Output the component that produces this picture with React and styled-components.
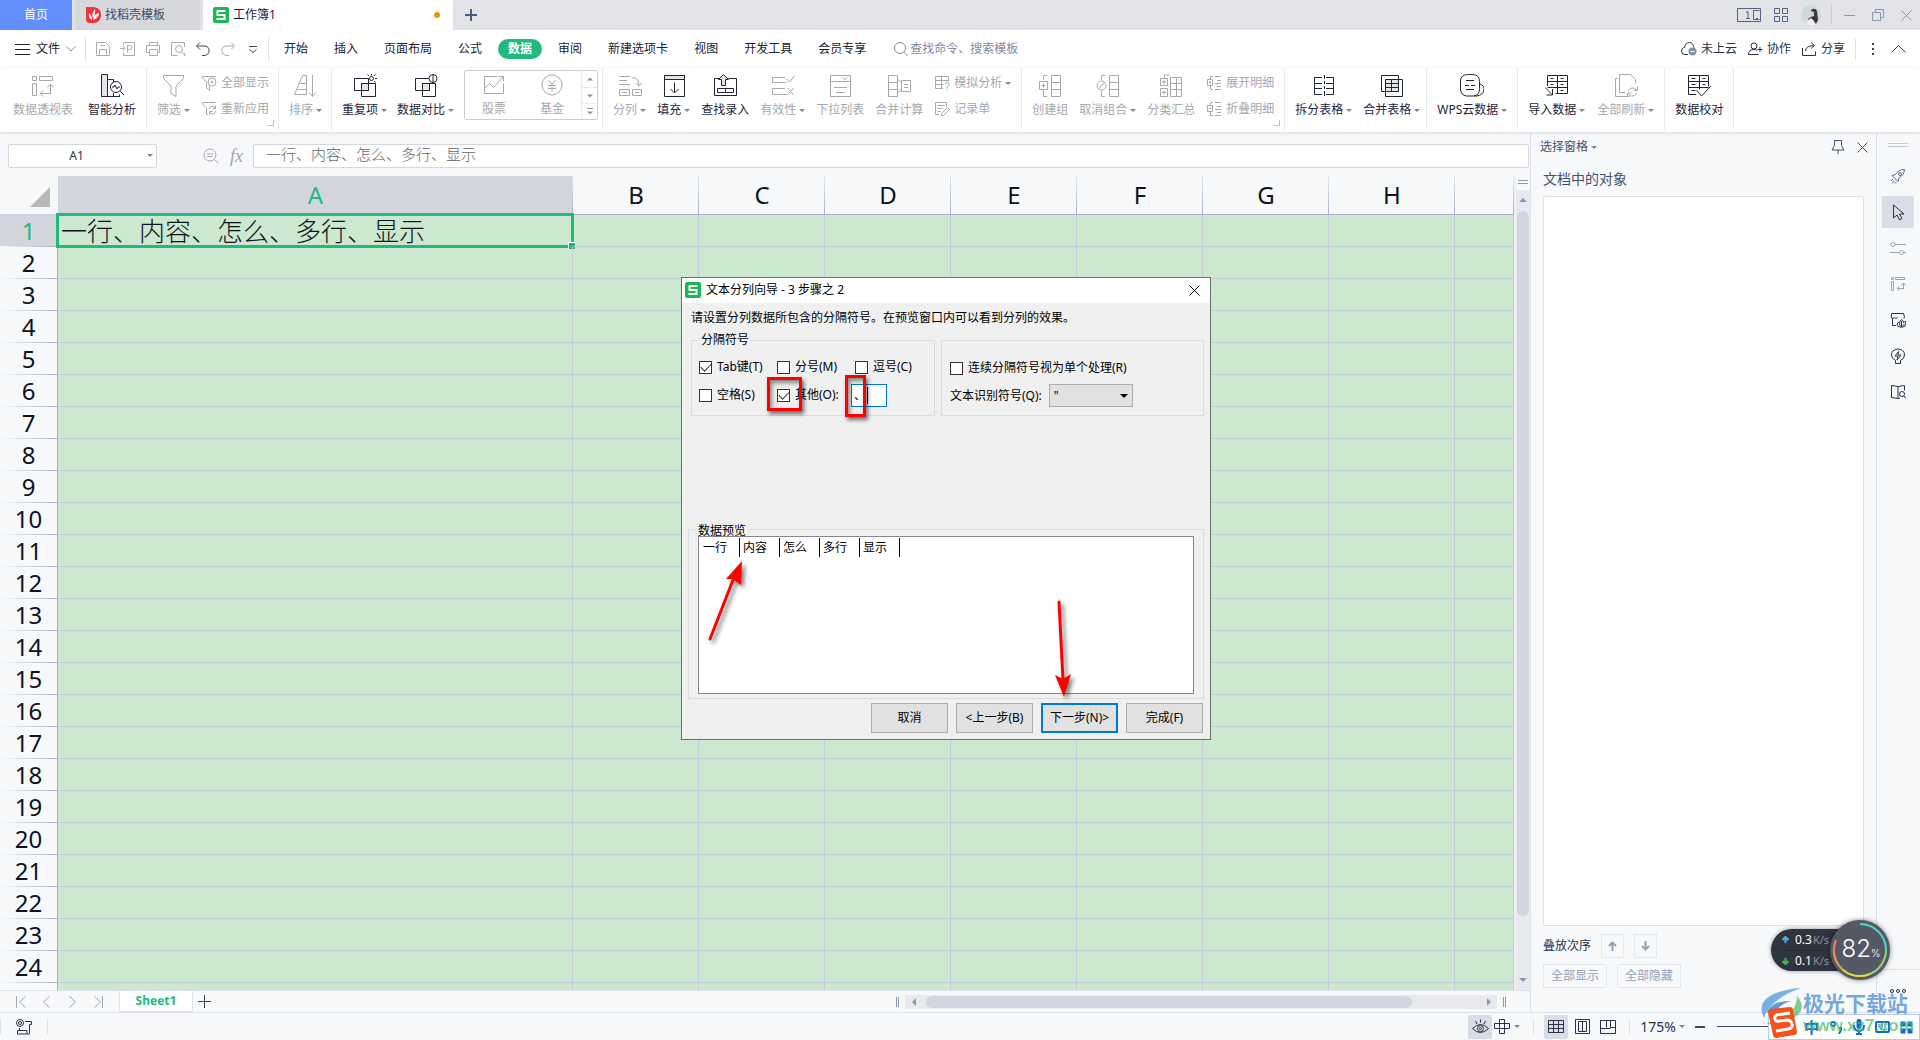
import styled, { createGlobalStyle, css } from 'styled-components';

const GlobalStyle = createGlobalStyle`
  * { box-sizing: border-box; }
  html, body { margin: 0; padding: 0; }
  body {
    font-family: "Noto Sans", "Noto Sans CJK SC", sans-serif;
    font-size: 12px;
    line-height: 16px;
    color: #2b3147;
    background: #f6f8fa;
    overflow: hidden;
  }
  button, input, select {
    font: inherit;
    color: inherit;
    margin: 0;
  }
  button {
    border: 0;
    background: none;
    padding: 0;
    white-space: nowrap;
  }
  a { color: inherit; text-decoration: none; }
  svg { display: block; flex: none; }
`;

/* ---------- icons ---------- */

const Icon = ({ w = 24, h = w, box, children, sw = 1 }) => (
  <svg width={w} height={h} viewBox={box || `0 0 ${w} ${h}`} fill="none" stroke="currentColor" strokeWidth={sw} aria-hidden="true">
    {children}
  </svg>
);

const big = {
  pivot: <path d="M1.5 2.5h4v4h-4zM8.5 2.5h13v4h-13zM1.5 9.5h4v12h-4zM19.5 20.5v-10M16.5 13.5l3-3.5 3 3.5M19.5 19.5h-10M12.5 16.5l-3.5 3 3.5 3" />,
  analyse: <>
    <path d="M1.5.5h6v22h-6z" fill="#e4e6ea" />
    <path d="M7.5 5.5h6v3M7.5 22.5h12M13.5 19v3.5M1.5 22.5h18v-2" />
    <circle cx="16" cy="13" r="5.5" />
    <path d="M12 13h2l1-2 2 4 1-2h2M20 17l4 4" />
  </>,
  filter: <path d="M1.500 1.500h20v3l-7.500 7.500v10.500l-5-3v-7.500l-7.500-7.500z" />,
  sort: <path d="M8.500 1.500l-8 19h12v-19zM5.500 9.500h7M3.500 15.500h9M18.500 1v21M15 18.500l3.500 4 3.500-4" />,
  repeat: <>
    <path d="M8.500 9.500h7v7h-7z" fill="#e4e6ea" />
    <path d="M1.500 4.500h14v12h-14zM8.500 9.500h14v13h-14z" />
    <circle cx="18.500" cy="4.500" r="2" />
    <path d="M18.500 0v1.500M22 4.500h2M21 2l1.500-1.500M16 2l-1.500-1.500M21 7l1.500 1.500" />
  </>,
  compare: <>
    <path d="M8.500 9.500h7v7h-7z" fill="#e4e6ea" />
    <path d="M15 4.500h-13.500v12h14v-7M8.500 9.500h13v13h-13z" />
    <circle cx="19" cy="4.500" r="4" /><path d="M19 0v9" />
  </>,
  stock: <path d="M15 3.500h-12.500v17h19v-10M2.500 15.500l5-5 4 4 10-11M16.500 3.500h5v5" />,
  fund: <><circle cx="12" cy="12" r="10" /><path d="M8.500 7l3.500 4.500 3.500-4.500M12 11.500v7M8 12.500h8M8 15.500h8" /></>,
  split: <path d="M1 2.500h11M1 6.500h8M1 10.500h11M1.500 15.500h10v6h-10zM14.500 15.500h9v6h-9zM4 18.500h5M17 18.500h4M14 3.500q7 0 7 8M18 8.500l3 3.500 3-3.500" />,
  fill: <><path d="M2.500 1.500h20v4h-20z" fill="#e4e6ea" /><path d="M2.500 1.500h20v21h-20zM2.500 5.500h20M12.500 8.500v10M8.500 15l4 4 4-4" /></>,
  lookup: <>
    <path d="M6 4.500h-4.500v17h22v-17h-8M4.500 14.500h16v4h-16zM12.500 14.500v4" />
    <path d="M8.500 11.500v-6h-3l5-5 5 5h-3v6z" fill="#e4e6ea" />
  </>,
  valid: <path d="M14 3.500h-12.500v5h14M14 14.500h-12.500v6h14M15.500 5l3 3 5-6M16.500 14l6 7M22.500 14l-6 7" />,
  dropdown: <path d="M2.500 1.500h20v21h-20zM2.500 7.500h20M14.500 3.500l2.500 2 2.500-2M6 13.500h13M8 18.500h9" />,
  merge: <path d="M1.500 1.500h9v21h-9zM1.500 8.500h9M1.500 15.500h9M10.500 5l4 4M10.500 19l4-4M14.500 6.500h9v11h-9zM17 10.500h4M17 13.500h4" />,
  group: <path d="M9 1.500h-3.500v4M5.500 16v6.500h3.500M1.500 7.500h8v8h-8zM3.500 11.500h4M5.500 9.500v4M13.500 1.500h9v21h-9zM13.500 8.500h9M13.500 15.500h9" />,
  ungroup: <><circle cx="5.500" cy="11.500" r="4.500" /><path d="M2.500 15l6-7M9 1.500h-3.500v4M5.500 17v5.500h3.500M13.500 1.500h9v21h-9zM13.500 8.500h9M13.500 15.500h9" /></>,
  subtotal: <path d="M5.500 4v-3h5M1.500 4.500h7v7h-7zM3 8h4M5 6v4M1.500 14.500h7v8h-7zM3 18.500h4M5 16.500v4M11.500 3.500h11v19h-11zM11.500 9.500h11M11.500 15.500h11M17.500 3.500v19" />,
  splitTable: <path d="M10 3.500h-7.500v17h7.500M2.500 9.500h7.500M2.500 14.500h7.500M14 3.500h7.500v17h-7.500M14 9.500h7.500M14 14.500h7.500M12.500 1v4M12.500 7v3M12.500 12v3M12.500 17v5" />,
  mergeTable: <><path d="M5.500 5.500h13v12h-13z" fill="#e4e6ea" /><path d="M1.500 1.500h17v16h-17zM18.500 5.500h4v17h-17v-5M5.500 5.500h13M5.500 9.500h13M5.500 13.500h13M5.500 5.500v12M11.500 5.500v12" /></>,
  cloudData: <path d="M7.500.500h5q7 0 7 7v7q0 7-6 7.500h-7q-6-1-6-7v-8q0-6 7-6.500zM19.500 10q5 1 4.500 6-1 5-7 6h-3M6 6.500h8M5 11.500h4M11 11.500h4M6 15.500h8" />,
  importData: <path d="M2.500 12v-10.500h20v18h-12M2.500 7.500h20M2.500 13.500h20M12.500 1.500v18M5.500 4.500h3M15.500 4.500h3M15.500 10.500h3M5.500 10.500h3M15.500 16.500h3M0 13.500l7 7M7.500 15v6h-6" />,
  refresh: <path d="M4 4.500h-2.500v18h14M11 18.500h-5.500v-18h11l5 5v4M14 17q2-4 6-3l3 2M23.500 12.500v4h-4M23 19q-2 4-6 3l-3-2M13.500 23v-4h4" />,
  verify: <path d="M9 20.500h-7.500v-19h20v11M1.500 7.500h20M1.500 13.500h20M12.500 1.500v14M4.500 4.500h4M15.500 4.500h3M4.500 10.500h4M15.500 10.500h3M4.500 16.500h4M9.500 16l5 6 9.500-10" />,
};

const small = {
  showAll: <><path d="M5.500 13v-6l-4-4v-1.500h13" /><path d="M5.500 13l3 2v-4" /><circle cx="11" cy="7" r="4" /><circle cx="11" cy="7" r="1" /></>,
  reapply: <><path d="M5.500 13v-6l-4-4v-1.500h13M5.500 13l2 1" /><path d="M8 8q1-3 4-3l2.500 2M14.500 4.500v3h-3M15 10q-1 3-4 3l-2.500-2M8.500 13.500v-3h3" /></>,
  whatIf: <path d="M9 13.500h-7.500v-12h13v5M1.500 5.500h13M1.500 9.500h8M7.500 1.500v12M11 9.500q0-2 2-2t2 2q0 1-2 2.500v1.500M13 14.500v1" />,
  record: <path d="M5 13.500h-3.500v-12h11v4M3.500 4.500h7M3.500 7.500h5M3.500 10.500h3M7.500 12.500l6-6 2 2-6 6h-2z" />,
  expand: <path d="M7 1.500h-2.500v3M4.500 11v3.500h2.500M1.500 4.500h5v6h-5zM3 7.500h2M4 6v3M9 1.500h6M11 5.500h4M9 8.500h6M11 11.500h4M9 14.500h6" />,
  collapse: <path d="M7 1.500h-2.500v3M4.500 11v3.500h2.500M1.500 4.500h5v6h-5zM3 7.500h2M9 1.500h6M11 5.500h4M9 8.500h6M11 11.500h4M9 14.500h6" />,
  save: <path d="M1.500 1.500h9l4 4v9h-13zM4.500 14.500v-6h7v6M5 4.500h5" />,
  exportPdf: <path d="M3.500 4v-2.500h11v13h-11v-3M0 7.500h4.500M2.500 5l2.500 2.500-2.500 2.500M7.500 11.500v-7h2q2.500 0 2.500 2t-2.500 2h-2" />,
  print: <path d="M4.500 4.500v-3h8v3M4.500 11.500h-3v-7h13v7h-2M4.500 8.500h8v6h-8z" />,
  preview: <><path d="M14.500 6v-4.500h-13v13h6M14.500 12v2.500" /><circle cx="9" cy="8" r="3.500" /><path d="M11.500 11l4 4" /></>,
  undo: <path d="M5 1.500l-3.500 3.500 3.500 3.500M2 5h7q5 0 5 4.500t-5 5h-2" />,
  redo: <path d="M11 1.500l3.500 3.500-3.500 3.500M14 5h-7q-5 0-5 4.500t5 5h2" />,
  search: <><circle cx="7" cy="7" r="5.500" /><path d="M11 11l3.500 4" /></>,
};

const side = {
  rocket: <><path d="M14.500 1.500q-6 0-9 5l-3.500 1 6 6 1-3.500q5-3 5.500-8.500z" /><circle cx="10" cy="6" r="1.500" /><path d="M3 11l-2 2M5 12.500l-3 3M6.500 14l-1.500 1.500" /></>,
  pointer: <path d="M3.500 1v13l3.500-3 2.500 5 2.500-1.500-2.500-4.500h4.500z" />,
  sliders: <><circle cx="3" cy="4.500" r="2" /><path d="M5 4.500h11M0 12.500h9" /><circle cx="11.500" cy="12.500" r="2" /><path d="M13.500 12.500h2.500" /></>,
  pivot: <path d="M1.500 1.500h2v2h-2zM5.500 1.500h9v2h-9zM1.500 5.500h2v9h-2zM13.500 13.500v-6M11.500 9.500l2-2.500 2 2.500M13.500 12.500h-6M9.500 10.500l-2.500 2 2.500 2" />,
  gallery: <><path d="M6 13.500h-3.500v-6.500q-2-1-1-5.500h12q1.500 3 .500 5M1.500 5.500q1.500 2 3 0 1.500 2 3 0" /><path d="M8 14.500q-2-2 0-4 1 0 1.500 1 0-3 2-4 2 1 2 3 1-1 2-1 1 3-1 5-3 1.500-6.500 0zM11.500 9v6M9 12l2 2.500M14.500 12l-2.500 2.500" /></>,
  idea: <><path d="M5.500 12.500q-4-2-4-5.500 0-5.500 6.500-6 6.500.500 6.500 6 0 3.500-4 5.500v3h-5z" /><path d="M8.500 3.500l-3.500 4.500h3l-1 4 4-5h-3z" /></>,
  book: <><path d="M8 2.500v12l-6.500-1v-12zM8 2.500l6.500-1v5M8 14.500l2-.500" /><circle cx="12" cy="10" r="2.500" /><path d="M14 12l2 2.500" /></>,
};

const WpsLogo = () => (
  <svg width="16" height="16" viewBox="0 0 16 16" aria-hidden="true">
    <rect width="16" height="16" rx="2" fill="#19b854" />
    <path d="M12.500 4h-8v4h7v4h-8" fill="none" stroke="#fff" strokeWidth="2" />
  </svg>
);

const Caret = styled.i`
  width: 0;
  height: 0;
  margin-left: 3px;
  border: 3px solid transparent;
  border-bottom: 0;
  border-top-color: #7c869c;
  flex: none;
`;

/* ---------- top bars ---------- */

const Shell = styled.div`
  display: flex;
  flex-direction: column;
  height: 100vh;
  position: relative;
`;

const TabBar = styled.header`
  display: flex;
  height: 30px;
  background: #e2e3e7;
`;

const tabColours = {
  home: css`width: 72px; justify-content: center; background: #628ffc; color: #fff; margin-right: 3px;`,
  idle: css`width: 125px; padding-left: 11px; background: #d7d8dc; color: #444b60; margin-right: 3px;`,
  open: css`width: 250px; padding: 0 13px 0 10px; background: #fff; color: #1d2233;`,
};

const FileTab = styled.button`
  display: flex;
  align-items: center;
  gap: 4px;
  ${p => tabColours[p.$kind]}
`;

const Unsaved = styled.span`
  width: 6px;
  height: 6px;
  border-radius: 50%;
  background: #e59a0c;
  margin-left: auto;
`;

const NewTab = styled.button`
  width: 36px;
  display: grid;
  place-items: center;
  color: #4b5a78;
`;

const WindowTools = styled.div`
  display: flex;
  align-items: center;
  gap: 13px;
  margin-left: auto;
  padding-right: 8px;
  color: #53617f;
`;

const WindowButtons = styled.div`
  display: flex;
  align-items: center;
  gap: 17px;
  height: 20px;
  margin-left: -3px;
  padding-left: 12px;
  border-left: 1px solid #c9ccd3;
  color: #8b98b2;
`;

const MenuBar = styled.nav`
  display: flex;
  align-items: center;
  height: 38px;
  background: #fff;
`;

const FileMenu = styled.button`
  display: flex;
  align-items: center;
  gap: 6px;
  height: 24px;
  padding: 0 9px 0 15px;
  border-right: 1px solid #dfe1e6;
  color: #1d2233;
`;

const QuickBar = styled.div`
  display: flex;
  align-items: center;
  gap: 9px;
  height: 24px;
  padding: 0 7px 0 9px;
  margin-right: 5px;
  border-right: 1px solid #dfe1e6;
`;

const IconButton = styled.button`
  color: ${p => (p.$off ? '#a9abb0' : '#3a4259')};
`;

const MenuItem = styled.button`
  height: 20px;
  padding: 0 10px;
  margin-right: 6px;
  border-radius: 10px;
  color: ${p => (p.$on ? '#fff' : '#1d2233')};
  background: ${p => (p.$on ? '#20bb7c' : 'none')};
  font-weight: ${p => (p.$on ? 700 : 400)};
`;

const Search = styled.button`
  display: flex;
  align-items: center;
  gap: 1px;
  margin-left: 11px;
  color: #7f8aa3;
`;

const CloudTools = styled.div`
  display: flex;
  align-items: center;
  gap: 11px;
  margin-left: auto;
  padding-right: 14px;
`;

const CloudButton = styled.button`
  display: flex;
  align-items: center;
  gap: 4px;
`;

const Ribbon = styled.div`
  display: flex;
  height: 64px;
  padding: 0 3px;
  background: #fff;
  box-shadow: 0 1px 3px rgba(60, 70, 90, 0.16);
  position: relative;
  z-index: 1;
`;

const Group = styled.div`
  display: flex;
  gap: ${p => p.$gap || 11}px;
  height: 62px;
  padding: 4px ${p => p.$end || 10}px 0 10px;
  border-right: 1px solid #e9ebee;
  position: relative;
  ${p => p.$launcher && css`
    &::after {
      content: "";
      position: absolute;
      right: 4px;
      bottom: 4px;
      width: 5px;
      height: 5px;
      border: solid #b8c0cc;
      border-width: 0 1px 1px 0;
    }
  `}
`;

const ToolButton = styled.button`
  display: flex;
  flex-direction: column;
  align-items: center;
  gap: 4px;
  height: 46px;
  padding-top: 2px;
  color: ${p => (p.$off ? '#a6a8ad' : '#1f2537')};
`;

const ToolLabel = styled.span`
  display: flex;
  align-items: center;
`;

const Stack = styled.div`
  display: flex;
  flex-direction: column;
  gap: 6px;
  padding-top: 1px;
`;

const RowTool = styled.button`
  display: flex;
  align-items: center;
  height: 20px;
  color: #a6a8ad;
  svg { margin-right: 4px; }
`;

const Gallery = styled.div`
  display: grid;
  grid-template-columns: 58px 58px 16px;
  height: 50px;
  margin-top: -2px;
  border: 1px solid #cccdd0;
  border-radius: 2px;
`;

const GalleryScroll = styled.div`
  display: grid;
  grid-template-rows: repeat(3, 1fr);
  border-left: 1px solid #ececef;
  button {
    display: grid;
    place-items: center;
    color: #8792a8;
  }
  button + button { border-top: 1px solid #ececef; }
`;

const Tool = ({ icon, label, caret, on }) => (
  <ToolButton $off={!on}>
    <Icon>{big[icon]}</Icon>
    <ToolLabel>{label}{caret && <Caret />}</ToolLabel>
  </ToolButton>
);

const SmallTool = ({ icon, label, caret }) => (
  <RowTool><Icon w={16}>{small[icon]}</Icon>{label}{caret && <Caret />}</RowTool>
);

/* ---------- sheet ---------- */

const Main = styled.main`
  display: flex;
  flex: 1;
  min-height: 0;
`;

const Work = styled.section`
  display: flex;
  flex-direction: column;
  flex: 1;
  min-width: 0;
`;

const FormulaRow = styled.div`
  display: flex;
  align-items: center;
  height: 44px;
  padding: 3px 1px 0 8px;
`;

const NameBox = styled.div`
  display: flex;
  align-items: center;
  width: 149px;
  height: 24px;
  padding-right: 3px;
  margin-right: 46px;
  background: #fff;
  border: 1px solid #d5d8de;
  border-radius: 2px;
  input {
    flex: 1;
    min-width: 0;
    border: 0;
    background: none;
    text-align: center;
  }
`;

const Fx = styled.span`
  margin: 0 10px 0 11px;
  font: italic 18px/20px "Liberation Serif", serif;
  color: #a2a4aa;
`;

const FormulaInput = styled.input`
  flex: 1;
  height: 24px;
  padding: 0 12px 4px;
  border: 1px solid #d5d8de;
  border-radius: 2px;
  background: #fff;
  color: #666;
  font-size: 15px;
  font-weight: 300;
`;

const GridArea = styled.div`
  display: flex;
  flex: 1;
  min-height: 0;
`;

const GridClip = styled.div`
  flex: 1;
  overflow: hidden;
  background: #cce8cf;
`;

const Sheet = styled.table`
  width: 100%;
  table-layout: fixed;
  border-collapse: separate;
  border-spacing: 0;
  font-size: 24px;
  line-height: 30px;
  color: #10131c;
`;

const ColHead = styled.th`
  height: 39px;
  padding: 0;
  font-weight: 400;
  color: ${p => (p.$on ? '#20bb7c' : 'inherit')};
  border-bottom: 1px solid #a9afc8;
  background: linear-gradient(#e6e9f0, #a9afc8) right / 1px 100% no-repeat, ${p => (p.$on ? '#d3d5dd' : '#f6f8fa')};
`;

const Corner = styled.th`
  height: 39px;
  padding: 0 8px 7px 0;
  border-bottom: 1px solid #c9cddc;
  background: #f6f8fa;
  vertical-align: bottom;
  svg { margin-left: auto; }
`;

const RowHead = styled.th`
  height: 32px;
  padding: 0 0 1px;
  font-weight: 400;
  color: ${p => (p.$on ? '#20bb7c' : 'inherit')};
  border-right: 1px solid #a9afc8;
  background: linear-gradient(90deg, #f6f8fa, #a9afc8) bottom / 100% 1px no-repeat, ${p => (p.$on ? '#d3d5dd' : '#f6f8fa')};
`;

const Cell = styled.td`
  height: 32px;
  padding: 0 0 0 3px;
  border: solid #c5c9df;
  border-width: 0 1px 1px 0;
  position: relative;
  font-size: 26px;
  font-weight: 300;
  white-space: nowrap;
`;

const Selection = styled.div`
  position: absolute;
  inset: -2px;
  border: 3px solid #20bb7c;
  &::after {
    content: "";
    position: absolute;
    right: -4px;
    bottom: -4px;
    width: 6px;
    height: 6px;
    background: #20bb7c;
    border: solid #fff;
    border-width: 1px 0 0 1px;
  }
`;

const VScroll = styled.div`
  display: flex;
  flex-direction: column;
  align-items: center;
  width: 16px;
  padding-top: 4px;
  border-left: 2px solid #eef0f4;
  color: #8b96b0;
`;

const SplitBar = styled.i`
  width: 10px;
  height: 4px;
  border: solid #8b96b0;
  border-width: 1px 0;
  margin-bottom: 6px;
`;

const VTrack = styled.div`
  display: flex;
  flex-direction: column;
  align-items: center;
  flex: 1;
  width: 14px;
  padding: 8px 0;
  background: #e8eaf0;
`;

const VThumb = styled.div`
  width: 12px;
  flex: 1;
  margin: 9px 0 62px;
  border-radius: 6px;
  background: #d3d6de;
`;

const SheetBar = styled.div`
  display: flex;
  align-items: center;
  height: 22px;
  border-top: 1px solid #dfe1e8;
  padding: 0 24px 0 16px;
`;

const PageArrows = styled.div`
  display: flex;
  gap: 16px;
  width: 103px;
  color: #a3a7b0;
`;

const SheetTab = styled.button`
  align-self: stretch;
  width: 74px;
  margin-right: 5px;
  background: #fff;
  border: solid #dfe1e8;
  border-width: 0 1px 1px;
  color: #20bb7c;
  font-weight: 700;
`;

const HScroll = styled.div`
  display: flex;
  align-items: center;
  width: 610px;
  gap: 6px;
  margin-left: auto;
  color: #8b96b0;
`;

const HTrack = styled.div`
  display: flex;
  align-items: center;
  flex: 1;
  height: 14px;
  padding: 0 6px 0 7px;
  gap: 10px;
  background: #e8eaf0;
`;

const HThumb = styled.div`
  flex: 1;
  height: 12px;
  margin-right: 65px;
  border-radius: 6px;
  background: #d3d6de;
`;

const Bars = styled.i`
  width: 3px;
  height: 10px;
  border: solid #8b96b0;
  border-width: 0 1px;
`;

/* ---------- right side ---------- */

const Pane = styled.aside`
  display: flex;
  flex-direction: column;
  width: 346px;
  padding: 0 12px 24px;
  border-left: 1px solid #dfe1e8;
`;

const PaneHead = styled.div`
  display: flex;
  align-items: center;
  height: 30px;
  gap: 12px;
  margin: 0 -4px 3px -3px;
  color: #45506b;
  button:first-child { margin-right: auto; display: flex; align-items: center; }
`;

const PaneTitle = styled.h2`
  margin: 0 0 3px;
  font-size: 14px;
  font-weight: 400;
  line-height: 28px;
  color: #45506b;
`;

const ObjectList = styled.div`
  flex: 1;
  margin-bottom: 8px;
  background: #fff;
  border: 1px solid #dfe1e6;
  border-radius: 2px;
`;

const PaneRow = styled.div`
  display: flex;
  align-items: center;
  height: 24px;
  gap: 10px;
  margin-top: ${p => p.$top || 0}px;
`;

const PaneButton = styled.button`
  display: grid;
  place-items: center;
  height: 24px;
  width: ${p => p.$w}px;
  border: 1px solid #e3e6ec;
  color: #98a2b5;
`;

const Side = styled.nav`
  display: flex;
  flex-direction: column;
  align-items: center;
  width: 44px;
  gap: 4px;
  padding: 11px 1px 0 0;
  border-left: 1px solid #dfe1e8;
`;

const Grip = styled.i`
  width: 20px;
  height: 4px;
  margin-bottom: 9px;
  border: solid #c6c9cf;
  border-width: 1px 0;
`;

const SideButton = styled.button`
  display: grid;
  place-items: center;
  width: 32px;
  height: 32px;
  border-radius: 2px;
  background: ${p => (p.$on ? '#d8dde6' : 'none')};
  color: ${p => (p.$off ? '#9aa2b3' : p.$soft ? '#5d6a87' : '#2b3147')};
`;

const SideMore = styled.button`
  align-self: stretch;
  display: grid;
  place-items: center;
  height: 43px;
  margin-top: auto;
  border-top: 1px solid #dfe1e8;
`;

const StatusBar = styled.footer`
  display: flex;
  align-items: center;
  height: 28px;
  border-top: 1px solid #dfe1e8;
  background: #f6f8fa;
`;

const StatusButton = styled.button`
  display: grid;
  place-items: center;
  width: ${p => p.$w || 24}px;
  height: 24px;
  border-radius: 2px;
  margin-right: 2px;
  background: ${p => (p.$on ? '#d8dde6' : 'none')};
`;

const StatusRight = styled.div`
  display: flex;
  align-items: center;
  margin-left: auto;
`;

const ViewButtons = styled.div`
  display: flex;
  padding: 0 7px 0 10px;
`;

const Rule = styled.i`
  width: 1px;
  height: ${p => p.$h || 14}px;
  background: #dcdfe6;
  margin: 0 ${p => p.$m}px;
`;

const Zoom = styled.button`
  display: flex;
  align-items: center;
  font-size: 14px;
  margin-right: 13px;
`;

const ZoomLabel = styled(Zoom)`
  margin: 0 10px;
`;

const ZoomRange = styled.input`
  appearance: none;
  width: 191px;
  height: 1px;
  margin: 0 12px;
  background: #3d4a66;
  &::-webkit-slider-thumb {
    appearance: none;
    width: 10px;
    height: 10px;
    border: 1px solid #3d4a66;
    border-radius: 50%;
    background: #fff;
  }
`;

/* ---------- dialog ---------- */

const Dialog = styled.section`
  position: absolute;
  left: 681px;
  top: 277px;
  width: 530px;
  border: 1px solid #66706a;
  background: #f0f0f0;
  color: #000;
  padding-bottom: 6px;
`;

const DialogTitle = styled.div`
  display: flex;
  align-items: center;
  height: 25px;
  padding: 0 10px 1px 3px;
  gap: 5px;
  background: #fff;
  button { margin-left: auto; }
`;

const Hint = styled.p`
  margin: 0;
  padding: 6px 9px 5px;
  line-height: 18px;
`;

const Columns = styled.div`
  display: grid;
  grid-template-columns: 244px 1fr;
  gap: 6px;
  align-items: end;
  padding: 0 6px 0 9px;
`;

const Box = styled.fieldset`
  min-width: 0;
  margin: 0;
  padding: 0;
  border: 1px solid #dcdcdc;
  legend {
    margin-left: 7px;
    padding: 0 2px;
    line-height: 16px;
  }
`;

const Separators = styled(Box)`
  display: grid;
  height: 84px;
  > div {
    display: grid;
    grid-template-columns: 78px 78px 1fr;
    grid-auto-rows: 28px;
    align-items: center;
    padding: 5px 0 0 7px;
  }
`;

const Options = styled(Box)`
  display: flex;
  flex-direction: column;
  gap: 5px;
  height: 76px;
  padding: 16px 0 0 8px;
`;

const Check = styled.label`
  display: flex;
  align-items: center;
  gap: 5px;
  height: 22px;
  white-space: nowrap;
  input {
    appearance: none;
    display: grid;
    place-items: center;
    width: 13px;
    height: 13px;
    flex: none;
    border: 1px solid #333;
    background: #fff;
  }
  input:checked::after {
    content: "";
    width: 9px;
    height: 5px;
    margin-top: -3px;
    border: solid #333;
    border-width: 0 0 1px 1px;
    transform: rotate(-45deg);
  }
`;

const OtherField = styled.div`
  position: relative;
  width: 36px;
  margin-left: -4px;
  input {
    display: block;
    width: 36px;
    height: 23px;
    padding: 0 2px;
    border: 1px solid #0078d7;
    background: #fff;
    outline: 0;
  }
  &::after {
    content: "";
    position: absolute;
    left: 16px;
    top: 3px;
    width: 1px;
    height: 17px;
    background: #000;
  }
`;

const Qualifier = styled.div`
  display: flex;
  align-items: center;
  gap: 7px;
`;

const SelectWrap = styled.div`
  position: relative;
  select {
    appearance: none;
    display: block;
    width: 84px;
    height: 23px;
    padding: 0 4px;
    border: 1px solid #adadad;
    border-radius: 0;
    background: #e1e1e1;
  }
  &::after {
    content: "";
    position: absolute;
    right: 5px;
    top: 10px;
    border: 4px solid transparent;
    border-bottom: 0;
    border-top-color: #000;
    pointer-events: none;
  }
`;

const Preview = styled(Box)`
  margin: 107px 6px 4px;
  height: 176px;
  position: relative;
  legend { line-height: 15px; height: 13px; }
`;

const PreviewBox = styled.div`
  height: 158px;
  margin: 0 9px;
  background: #fff;
  border: 1px solid #828790;
  padding: 1px;
`;

const PreviewTable = styled.table`
  border-collapse: separate;
  border-spacing: 0;
  td {
    width: 40px;
    height: 19px;
    padding: 1px 0 0 3px;
    line-height: 18px;
    border-right: 1px solid #000;
  }
`;

const Actions = styled.div`
  display: flex;
  justify-content: flex-end;
  gap: 8px;
  padding-right: 7px;
  button {
    width: 77px;
    height: 30px;
    border: 1px solid #adadad;
    background: #e1e1e1;
  }
  button.default { border: 2px solid #0078d7; }
`;

const Mark = styled.div`
  position: absolute;
  left: ${p => p.$x}px;
  top: ${p => p.$y}px;
  width: ${p => p.$w}px;
  height: ${p => p.$h}px;
  border: 3px solid #f00;
  box-shadow: 2px 3px 4px rgba(0, 0, 0, 0.55), inset 2px 3px 4px rgba(0, 0, 0, 0.45);
`;

const Arrows = styled.svg`
  position: absolute;
  left: 0;
  top: 270px;
  filter: drop-shadow(3px 3px 2px rgba(0, 0, 0, 0.5));
`;

/* ---------- floating widgets ---------- */

const Speed = styled.div`
  position: absolute;
  right: 30px;
  bottom: 60px;
  display: flex;
  align-items: center;
  height: 60px;
`;

const Rates = styled.div`
  width: 91px;
  height: 42px;
  padding-left: 11px;
  border-radius: 21px 0 0 21px;
  background: #30343f;
  margin-right: -32px;
  box-shadow: 0 0 4px rgba(0, 0, 0, 0.4);
  div {
    display: flex;
    align-items: center;
    gap: 6px;
    height: 21px;
    color: #fff;
  }
  div + div { border-top: 1px solid #282b35; }
  span { color: #8d919b; margin-left: -5px; font-size: 11px; }
`;

const Dial = styled.div`
  position: relative;
  width: 60px;
  height: 60px;
  border-radius: 50%;
  background: #555966;
  box-shadow: 0 0 5px rgba(0, 0, 0, 0.5);
  display: flex;
  align-items: baseline;
  justify-content: center;
  padding-left: 2px;
  color: #fff;
  font: 300 24px/58px "Inter", "Noto Sans", sans-serif;
  small { font-size: 10px; }
  svg { position: absolute; inset: 0; }
`;

const Ime = styled.div`
  position: absolute;
  right: 0;
  bottom: 0;
  display: flex;
  align-items: center;
  gap: 10px;
  width: 152px;
  height: 26px;
  padding: 0 6px 0 35px;
  border: 1px solid #b9c8ea;
  background: #fff;
  color: #0c6bd6;
  font-size: 15px;
  font-weight: 700;
`;

const SiteMark = styled.a`
  position: absolute;
  right: 11px;
  bottom: 2px;
  width: 148px;
  height: 50px;
  padding-left: 42px;
  font-size: 21px;
  line-height: 30px;
  font-weight: 700;
  color: rgba(82, 148, 214, 0.8);
  white-space: nowrap;
  span {
    display: block;
    font: 700 17px/16px "Liberation Sans", sans-serif;
    color: rgba(74, 184, 104, 0.7);
  }
  svg { position: absolute; left: 0; top: 0; }
`;

const columns = ['A', 'B', 'C', 'D', 'E', 'F', 'G', 'H', ''];
const rows = Array.from({ length: 24 }, (_, i) => i + 1);
const cellText = '一行、内容、怎么、多行、显示';
const menus = ['开始', '插入', '页面布局', '公式', '数据', '审阅', '新建选项卡', '视图', '开发工具', '会员专享'];

function TopTabs() {
  return (
    <TabBar>
      <FileTab $kind="home">首页</FileTab>
      <FileTab $kind="idle">
        <svg width="15" height="16" viewBox="0 0 15 16" aria-hidden="true">
          <path d="M0 0h8q7 1 7 8t-7 8h-4q-4 0-4-4z" fill="#f5323c" />
          <path d="M9 2q1 5-2 9-2-4 2-9zM3 6q3 2 3 7-4-2-3-7zM13 6q0 5-6 7 1-6 6-7z" fill="#fff" />
        </svg>
        找稻壳模板
      </FileTab>
      <FileTab $kind="open"><WpsLogo />工作簿1<Unsaved /></FileTab>
      <NewTab aria-label="新建"><Icon w={12} sw={2}><path d="M6 0v12M0 6h12" /></Icon></NewTab>
      <WindowTools>
        <Icon w={24} h={14}>
          <path d="M.500.500h23v13h-23zM22.500 2.500h-6v9h6M19 10.500h2" />
          <path d="M9 4.500l2-1v7M9 10.500h4" />
        </Icon>
        <Icon w={14}><path d="M.500.500h5v5h-5zM8.500.500h5v5h-5zM.500 8.500h5v5h-5zM8.500 8.500h5v5h-5z" /></Icon>
        <svg width="20" height="20" viewBox="0 0 20 20" aria-hidden="true">
          <circle cx="10" cy="10" r="10" fill="#ccd9de" />
          <path d="M10 5q4-3 6 1l1 9-2 4-2-3-4 1-2-3 3-2z" fill="#41363c" />
          <path d="M10 6l3 1v4l-3 1z" fill="#eac9b8" />
          <path d="M5 17l5-4 3 3v4h-5z" fill="#eef4f7" />
        </svg>
        <WindowButtons>
          <button aria-label="最小化"><Icon w={11}><path d="M0 5.500h11" /></Icon></button>
          <button aria-label="还原"><Icon w={12}><path d="M.500 3.500h8v8h-8zM3.500 3v-2.500h8v8h-2.500" /></Icon></button>
          <button aria-label="关闭"><Icon w={11}><path d="M.500.500l10 10M10.500.500l-10 10" /></Icon></button>
        </WindowButtons>
      </WindowTools>
    </TabBar>
  );
}

function Menu() {
  return (
    <MenuBar>
      <FileMenu>
        <Icon w={15} h={11}><path d="M0 .500h15M0 5.500h15M0 10.500h15" /></Icon>
        文件
        <Icon w={10} h={6}><path d="M.500.500l4.500 4.500 4.500-4.500" stroke="#8a8f9c" /></Icon>
      </FileMenu>
      <QuickBar>
        <IconButton $off aria-label="保存"><Icon w={16}>{small.save}</Icon></IconButton>
        <IconButton $off aria-label="输出"><Icon w={16}>{small.exportPdf}</Icon></IconButton>
        <IconButton $off aria-label="打印"><Icon w={16}>{small.print}</Icon></IconButton>
        <IconButton $off aria-label="预览"><Icon w={16}>{small.preview}</Icon></IconButton>
        <IconButton aria-label="撤销"><Icon w={16}>{small.undo}</Icon></IconButton>
        <IconButton $off aria-label="恢复"><Icon w={16}>{small.redo}</Icon></IconButton>
        <IconButton aria-label="自定义"><Icon w={16}><path d="M4 5.500h8M4.500 8.500l3.500 3 3.500-3" /></Icon></IconButton>
      </QuickBar>
      {menus.map(m => <MenuItem key={m} $on={m === '数据'}>{m}</MenuItem>)}
      <Search><Icon w={16}>{small.search}</Icon>查找命令、搜索模板</Search>
      <CloudTools>
        <CloudButton>
          <Icon w={16} h={14}>
            <path d="M7 12.500h-3q-3.500 0-3.500-3.500t3-3.500q1-5 5-5 3.500 0 4.500 5" />
            <circle cx="11.500" cy="9.500" r="4" fill="#8791a5" stroke="none" />
            <path d="M9.500 9.500h4" stroke="#fff" />
          </Icon>
          未上云
        </CloudButton>
        <CloudButton>
          <Icon w={15} h={14}><circle cx="6" cy="4" r="3" /><path d="M.500 12.500q0-5 5.500-5 2 0 3 1M.500 12.500h10M12 5v5M9.500 7.500h5" /></Icon>
          协作
        </CloudButton>
        <CloudButton>
          <Icon w={15} h={14}><path d="M.500 6v7.500h13v-4M3.500 9q0-5 8-5.500M9 .500l3.500 3-3.500 3" /></Icon>
          分享
        </CloudButton>
        <Rule $h={20} $m={-1} />
        <IconButton aria-label="更多"><Icon w={14} h={12}><path d="M6 1h2M6 6h2M6 11h2" strokeWidth="2" /></Icon></IconButton>
        <IconButton aria-label="收起"><Icon w={15} h={8}><path d="M.500 7.500l7-7 7 7" /></Icon></IconButton>
      </CloudTools>
    </MenuBar>
  );
}

function Tools() {
  return (
    <Ribbon>
      <Group $gap={15}>
        <Tool icon="pivot" label="数据透视表" />
        <Tool icon="analyse" label="智能分析" on />
      </Group>
      <Group $launcher $end={9}>
        <Tool icon="filter" label="筛选" caret />
        <Stack>
          <SmallTool icon="showAll" label="全部显示" />
          <SmallTool icon="reapply" label="重新应用" />
        </Stack>
      </Group>
      <Group $end={9}>
        <Tool icon="sort" label="排序" caret />
      </Group>
      <Group $gap={10} $end={4}>
        <Tool icon="repeat" label="重复项" caret on />
        <Tool icon="compare" label="数据对比" caret on />
        <Gallery>
          <Tool icon="stock" label="股票" />
          <Tool icon="fund" label="基金" />
          <GalleryScroll>
            <button aria-label="上"><Icon w={6} h={4}><path d="M0 3.500l3-3 3 3z" fill="currentColor" stroke="none" /></Icon></button>
            <button aria-label="下"><Icon w={6} h={4}><path d="M0 .500l3 3 3-3z" fill="currentColor" stroke="none" /></Icon></button>
            <button aria-label="展开"><Icon w={6} h={7}><path d="M0 .500h6" /><path d="M0 3.500l3 3 3-3z" fill="currentColor" stroke="none" /></Icon></button>
          </GalleryScroll>
        </Gallery>
      </Group>
      <Group>
        <Tool icon="split" label="分列" caret />
        <Tool icon="fill" label="填充" caret on />
        <Tool icon="lookup" label="查找录入" on />
        <Tool icon="valid" label="有效性" caret />
        <Tool icon="dropdown" label="下拉列表" />
        <Tool icon="merge" label="合并计算" />
        <Stack>
          <SmallTool icon="whatIf" label="模拟分析" caret />
          <SmallTool icon="record" label="记录单" />
        </Stack>
      </Group>
      <Group $launcher>
        <Tool icon="group" label="创建组" />
        <Tool icon="ungroup" label="取消组合" caret />
        <Tool icon="subtotal" label="分类汇总" />
        <Stack>
          <SmallTool icon="expand" label="展开明细" />
          <SmallTool icon="collapse" label="折叠明细" />
        </Stack>
      </Group>
      <Group $end={6}>
        <Tool icon="splitTable" label="拆分表格" caret on />
        <Tool icon="mergeTable" label="合并表格" caret on />
      </Group>
      <Group>
        <Tool icon="cloudData" label="WPS云数据" caret on />
      </Group>
      <Group $gap={12}>
        <Tool icon="importData" label="导入数据" caret on />
        <Tool icon="refresh" label="全部刷新" caret />
      </Group>
      <Group>
        <Tool icon="verify" label="数据校对" on />
      </Group>
    </Ribbon>
  );
}

function Grid() {
  return (
    <GridArea>
      <GridClip>
        <Sheet>
          <colgroup>
            <col width="58" />
            <col width="515" />
            {columns.slice(1, -1).map(c => <col key={c} width="126" />)}
            <col />
          </colgroup>
          <thead>
            <tr>
              <Corner><Icon w={20}><path d="M20 0v20h-20z" fill="#b7b8ba" stroke="none" /></Icon></Corner>
              {columns.map(c => <ColHead key={c} $on={c === 'A'}>{c}</ColHead>)}
            </tr>
          </thead>
          <tbody>
            {rows.map(r => (
              <tr key={r}>
                <RowHead $on={r === 1}>{r}</RowHead>
                {columns.map(c => (
                  <Cell key={c}>{r === 1 && c === 'A' && <>{cellText}<Selection /></>}</Cell>
                ))}
              </tr>
            ))}
            <tr>
              <RowHead />
              {columns.map(c => <Cell key={c} />)}
            </tr>
          </tbody>
        </Sheet>
      </GridClip>
      <VScroll>
        <SplitBar />
        <VTrack>
          <Icon w={8} h={4}><path d="M0 4l4-4 4 4z" fill="currentColor" stroke="none" /></Icon>
          <VThumb />
          <Icon w={8} h={4}><path d="M0 0l4 4 4-4z" fill="currentColor" stroke="none" /></Icon>
        </VTrack>
      </VScroll>
    </GridArea>
  );
}

function SheetTabs() {
  return (
    <SheetBar>
      <PageArrows>
        <Icon w={10} h={12}><path d="M.500 0v12M9.500.500l-6 5.500 6 5.500" /></Icon>
        <Icon w={10} h={12}><path d="M7.500.500l-6 5.500 6 5.500" /></Icon>
        <Icon w={10} h={12}><path d="M1.500.500l6 5.500-6 5.500" /></Icon>
        <Icon w={10} h={12}><path d="M8.500 0v12M.500.500l6 5.500-6 5.500" /></Icon>
      </PageArrows>
      <SheetTab>Sheet1</SheetTab>
      <IconButton aria-label="新建工作表"><Icon w={13}><path d="M6.500 0v13M0 6.500h13" /></Icon></IconButton>
      <HScroll>
        <Bars />
        <HTrack>
          <Icon w={4} h={8}><path d="M4 0l-4 4 4 4z" fill="currentColor" stroke="none" /></Icon>
          <HThumb />
          <Icon w={4} h={8}><path d="M0 0l4 4-4 4z" fill="currentColor" stroke="none" /></Icon>
        </HTrack>
        <Bars />
      </HScroll>
    </SheetBar>
  );
}

function SelectionPane() {
  return (
    <Pane>
      <PaneHead>
        <button>选择窗格<Caret /></button>
        <button aria-label="固定"><Icon w={14} h={14}><path d="M3.500.500h7v5l2.500 4.500h-12l2.500-4.500zM7 10v4" /></Icon></button>
        <button aria-label="关闭窗格"><Icon w={11}><path d="M.500.500l10 10M10.500.500l-10 10" /></Icon></button>
      </PaneHead>
      <PaneTitle>文档中的对象</PaneTitle>
      <ObjectList />
      <PaneRow>
        叠放次序
        <PaneButton $w={23} aria-label="上移"><Icon w={9} h={10} sw={2}><path d="M4.500 10v-8M1 5l3.500-3.500 3.500 3.500" /></Icon></PaneButton>
        <PaneButton $w={23} aria-label="下移"><Icon w={9} h={10} sw={2}><path d="M4.500 0v8M1 5l3.500 3.500 3.500-3.500" /></Icon></PaneButton>
      </PaneRow>
      <PaneRow $top={6}>
        <PaneButton $w={64}>全部显示</PaneButton>
        <PaneButton $w={64}>全部隐藏</PaneButton>
      </PaneRow>
    </Pane>
  );
}

function SideRail() {
  return (
    <Side>
      <Grip />
      <SideButton $soft aria-label="推荐"><Icon w={16}>{side.rocket}</Icon></SideButton>
      <SideButton $on aria-label="选择"><Icon w={16} h={17}>{side.pointer}</Icon></SideButton>
      <SideButton $off aria-label="属性"><Icon w={16}>{side.sliders}</Icon></SideButton>
      <SideButton $off aria-label="透视表"><Icon w={16}>{side.pivot}</Icon></SideButton>
      <SideButton aria-label="素材"><Icon w={16}>{side.gallery}</Icon></SideButton>
      <SideButton aria-label="技巧"><Icon w={16}>{side.idea}</Icon></SideButton>
      <SideButton aria-label="帮助"><Icon w={16}>{side.book}</Icon></SideButton>
      <SideMore aria-label="更多">
        <Icon w={16} h={4}><circle cx="2" cy="2" r="1.500" /><circle cx="8" cy="2" r="1.500" /><circle cx="14" cy="2" r="1.500" /></Icon>
      </SideMore>
    </Side>
  );
}

function Status() {
  return (
    <StatusBar>
      <Rule $m={0} />
      <StatusButton $w={46} aria-label="宏">
        <Icon w={16}><circle cx="4" cy="4" r="3.500" /><circle cx="4" cy="4" r="1.500" /><path d="M9 2.500h6.500v3h-2v9M3.500 9v2.500M1.500 11.500h9.500v3.500h-9.500zM11 15h2.500" /></Icon>
      </StatusButton>
      <Rule $m={-2} />
      <StatusRight>
        <StatusButton $on aria-label="护眼模式">
          <Icon w={17} h={16}>
            <path d="M.500 9.500q8-8 16 0-8 8-16 0zM8.500.500v3M3.500 2l1.500 3M13.500 2l-1.500 3" />
            <circle cx="8.500" cy="9.500" r="3" /><circle cx="8.500" cy="9.500" r="1" />
          </Icon>
        </StatusButton>
        <Zoom aria-label="阅读模式">
          <Icon w={17} h={15}><path d="M5.500.500h5v14h-5zM.500 4.500h15v5h-15zM5.500 4.500v5M10.500 4.500v5" /></Icon>
          <Caret />
        </Zoom>
        <Rule $m={0} />
        <ViewButtons>
          <StatusButton $on aria-label="普通视图"><Icon w={16} h={13}><path d="M.500.500h15v12h-15zM.500 4.500h15M.500 8.500h15M5.500.500v12M10.500.500v12" /></Icon></StatusButton>
          <StatusButton aria-label="分页预览"><Icon w={15} h={15}><path d="M.500.500h14v14h-14zM3.500 2.500h8v10h-8zM7.500 2.500v10" /></Icon></StatusButton>
          <StatusButton aria-label="页面布局视图"><Icon w={16} h={14}><path d="M.500.500h15v13h-15zM6.500.500v7M10.500.500v7M.500 8.500h10M10.500 7.500h5" /></Icon></StatusButton>
        </ViewButtons>
        <Rule $m={0} />
        <ZoomLabel>175%<Caret /></ZoomLabel>
        <IconButton aria-label="缩小"><Icon w={10} h={2} sw={2}><path d="M0 1h10" /></Icon></IconButton>
        <ZoomRange type="range" min="10" max="400" defaultValue="175" aria-label="缩放" />
      </StatusRight>
    </StatusBar>
  );
}

function Wizard() {
  return (
    <Dialog role="dialog" aria-label="文本分列向导">
      <DialogTitle>
        <WpsLogo />
        文本分列向导 - 3 步骤之 2
        <button aria-label="关闭向导"><Icon w={11}><path d="M.500.500l10 10M10.500.500l-10 10" /></Icon></button>
      </DialogTitle>
      <Hint>请设置分列数据所包含的分隔符号。在预览窗口内可以看到分列的效果。</Hint>
      <Columns>
        <Separators>
          <legend>分隔符号</legend>
          <div>
            <Check><input type="checkbox" defaultChecked />Tab键(T)</Check>
            <Check><input type="checkbox" />分号(M)</Check>
            <Check><input type="checkbox" />逗号(C)</Check>
            <Check><input type="checkbox" />空格(S)</Check>
            <Check><input type="checkbox" defaultChecked />其他(O):</Check>
            <OtherField><input defaultValue="、" aria-label="其他分隔符" /></OtherField>
          </div>
        </Separators>
        <Options>
          <Check><input type="checkbox" />连续分隔符号视为单个处理(R)</Check>
          <Qualifier>
            <label htmlFor="qualifier">文本识别符号(Q):</label>
            <SelectWrap>
              <select id="qualifier" defaultValue={'"'}><option>"</option><option>'</option></select>
            </SelectWrap>
          </Qualifier>
        </Options>
      </Columns>
      <Preview>
        <legend>数据预览</legend>
        <PreviewBox>
          <PreviewTable>
            <tbody>
              <tr>{cellText.split('、').map(t => <td key={t}>{t}</td>)}</tr>
            </tbody>
          </PreviewTable>
        </PreviewBox>
      </Preview>
      <Actions>
        <button>取消</button>
        <button>&lt;上一步(B)</button>
        <button className="default">下一步(N)&gt;</button>
        <button>完成(F)</button>
      </Actions>
      <Mark $x={85} $y={99} $w={35} $h={34} />
      <Mark $x={163} $y={97} $w={21} $h={42} />
      <Arrows width="528" height="170" viewBox="0 0 528 170" fill="#f00" aria-hidden="true">
        <path d="M28 91L51 32" stroke="#f00" strokeWidth="3" strokeLinecap="round" />
        <path d="M60 13L44 31L51 31L59 37z" />
        <path d="M377 54L381 132" stroke="#f00" strokeWidth="3" strokeLinecap="round" />
        <path d="M382 149L373 127L381 131L389 126z" />
      </Arrows>
    </Dialog>
  );
}

function SpeedBall() {
  return (
    <Speed>
      <Rates>
        <div><Icon w={7} h={7} sw={2}><path d="M3.500 7v-5M.500 4l3-3 3 3" stroke="#4bb4f2" /></Icon>0.3 <span>K/s</span></div>
        <div><Icon w={7} h={7} sw={2}><path d="M3.500 0v5M.500 3l3 3 3-3" stroke="#36c04c" /></Icon>0.1 <span>K/s</span></div>
      </Rates>
      <Dial>
        <svg width="60" height="60" viewBox="0 0 60 60" fill="none" strokeWidth="2" aria-hidden="true">
          <path d="M30 4A26 26 0 0 1 56 30" stroke="#4fd8cf" />
          <path d="M56 30A26 26 0 0 1 40 54" stroke="#8fd87a" />
          <path d="M40 54A26 26 0 0 1 12 49" stroke="#e6d84a" />
          <path d="M12 49A26 26 0 0 1 4 33" stroke="#eda04e" />
          <path d="M4 33A26 26 0 0 1 6 20" stroke="#f07b5c" />
        </svg>
        82<small>%</small>
      </Dial>
    </Speed>
  );
}

function InputBar() {
  return (
    <>
      <Ime>
        中
        <Icon w={14} h={14}><circle cx="4" cy="4" r="2" strokeWidth="2" /><path d="M10 8h2v2l-2 4" strokeWidth="2" /></Icon>
        <Icon w={12} h={16}><rect x="3.500" y="0" width="5" height="10" rx="2" fill="currentColor" stroke="none" /><path d="M1 6q0 6 5 6t5-6M6 12v4M3 15h6" strokeWidth="2" /></Icon>
        <Icon w={15} h={12}><rect x="1" y="1" width="13" height="10" rx="1" strokeWidth="2" /><path d="M3 4h9M3 6h9M5 8h5" strokeDasharray="2 1" /></Icon>
        <Icon w={13} h={13}><path d="M0 0h6v6h-6zM7 0h6v6h-6zM0 7h6v6h-6zM7 7h6v6h-6z" fill="currentColor" stroke="#fff" /></Icon>
      </Ime>
      <SiteMark href="#site">
        <svg width="42" height="50" viewBox="0 0 42 50" aria-hidden="true">
          <path d="M3 30Q-6 12 18 4Q32 0 40 0Q22 6 12 16Q5 23 3 30z" fill="#5fa6df" opacity="0.85" />
          <path d="M36 8Q48 22 30 32Q16 40 5 35Q24 33 31 23Q36 16 36 8z" fill="#62b96c" opacity="0.75" />
          <path d="M6 24Q12 12 30 13Q16 17 11 30z" fill="#3c83cc" opacity="0.8" />
          <path d="M7 24q0-3 3-3l19-2q3 0 3 3l4 22q0 3-3 3l-17 3q-4 0-4-3z" fill="#f4511e" />
          <path d="M29 25l-13 2q-3 1-2 4t4 2l8-1q4 0 5 4t-4 5l-12 2" fill="none" stroke="#fff" strokeWidth="3" />
        </svg>
        极光下载站
        <span>www.xz7.com</span>
      </SiteMark>
    </>
  );
}

export default function App() {
  return (
    <>
      <GlobalStyle />
      <Shell>
        <TopTabs />
        <Menu />
        <Tools />
        <Main>
          <Work>
            <FormulaRow>
              <NameBox><input defaultValue="A1" aria-label="名称框" /><Caret /></NameBox>
              <IconButton $off aria-label="浏览公式"><Icon w={16}><circle cx="7" cy="7" r="6" /><path d="M4 6h6M4 8.500h6M11.500 11.500l4 4" /></Icon></IconButton>
              <Fx>fx</Fx>
              <FormulaInput defaultValue={cellText} aria-label="编辑栏" />
            </FormulaRow>
            <Grid />
            <SheetTabs />
          </Work>
          <SelectionPane />
          <SideRail />
        </Main>
        <Status />
        <Wizard />
        <SpeedBall />
        <InputBar />
      </Shell>
    </>
  );
}
